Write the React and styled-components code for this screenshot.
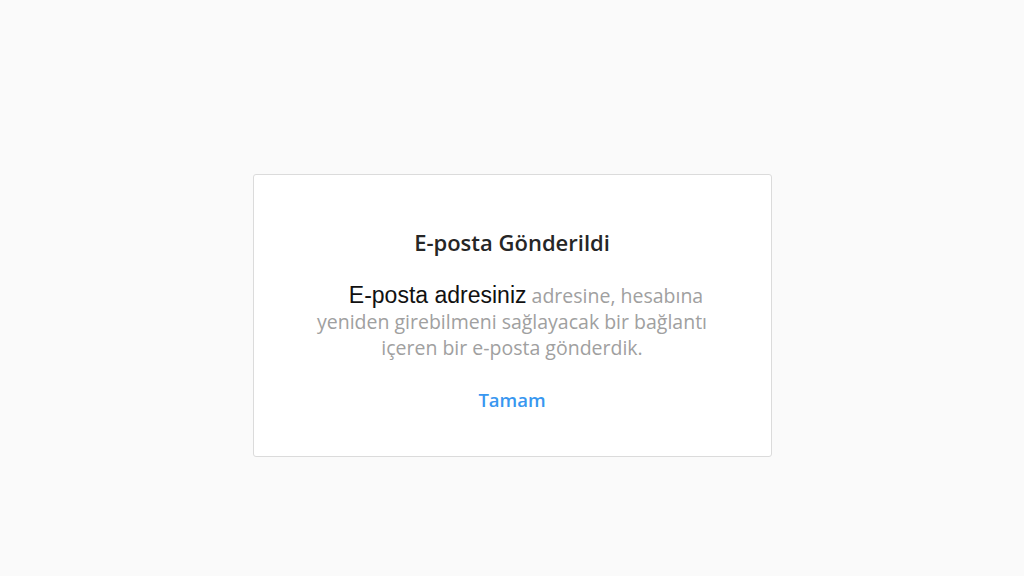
import styled, { createGlobalStyle } from "styled-components";

const Global = createGlobalStyle`
  html, body {
    margin: 0;
    padding: 0;
    background: #fafafa;
  }
  #root {
    min-height: 576px;
  }
`

const Page = styled.div`
  min-height: 576px;
  display: flex;
  align-items: center;
  justify-content: center;
  font-family: "Open Sans", "Noto Sans", sans-serif;
`
const Card = styled.div`
  box-sizing: border-box;
  width: 519px;
  height: 283px;
  margin-top: 54px;
  background: #fff;
  border: 1px solid #dbdbdb;
  border-radius: 3px;
  display: flex;
  flex-direction: column;
  align-items: center;
  padding-top: 54px;
`
const Title = styled.h2`
  margin: 0;
  font-size: 22px;
  font-weight: 600;
  color: #262626;
  line-height: 26px;
`
const Message = styled.p`
  margin: 27px 0 0;
  width: 400px;
  text-align: center;
  font-size: 19.5px;
  line-height: 26px;
  color: #a0a0a0;
`
const Email = styled.span`
  font-family: "Liberation Sans", Arial, sans-serif;
  font-size: 23px;
  color: #111;
  padding-left: 28px;
`
const OkButton = styled.button`
  margin-top: 26px;
  background: none;
  border: none;
  padding: 0;
  font-family: inherit;
  font-size: 18.5px;
  font-weight: 600;
  color: #3897f0;
  cursor: pointer;
`

export default function App() {
  return (
    <>
      <Global />
      <Page>
        <Card>
          <Title>E-posta Gönderildi</Title>
          <Message>
            <Email>E-posta adresiniz</Email> adresine, hesabına yeniden girebilmeni sağlayacak bir bağlantı içeren bir e-posta gönderdik.
          </Message>
          <OkButton>Tamam</OkButton>
        </Card>
      </Page>
    </>
  )
}
